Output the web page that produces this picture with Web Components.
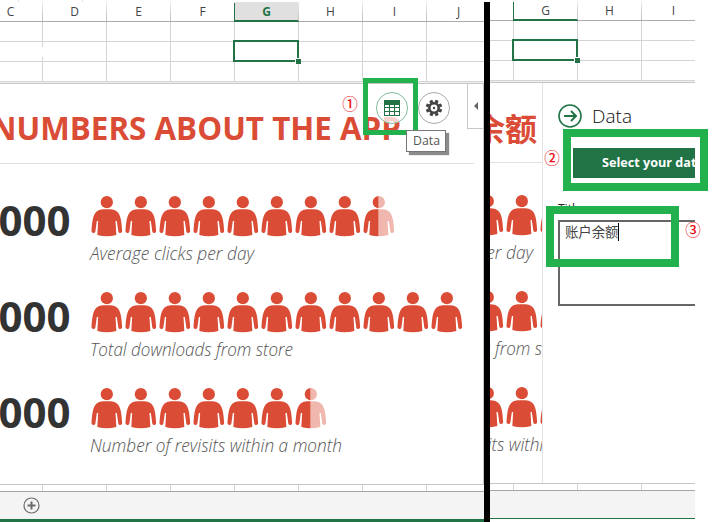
<!DOCTYPE html>
<html lang="en">
<head>
<meta charset="utf-8">
<title>Data app in a worksheet</title>
<style>
html,body{margin:0;background:#fff}
body{width:713px;height:522px;overflow:hidden;font-family:"Open Sans","Noto Sans","Noto Sans CJK SC",sans-serif}
</style>
</head>
<body>
<demo-page></demo-page>
<script>
const define=(name,html,setup)=>customElements.define(name,class extends HTMLElement{
  constructor(){super();this.attachShadow({mode:'open'})}
  connectedCallback(){
    if(this.ready)return;this.ready=true;
    const t=document.createElement('template');
    t.innerHTML=typeof html==='function'?html(this):html;
    this.shadowRoot.append(t.content.cloneNode(true));
    if(setup)setup(this,this.shadowRoot);
  }
});

/* One line of text stretched to a given width */
define('fit-text',`<style>:host{display:block;white-space:nowrap}span{display:inline-block;transform-origin:0 50%}</style><span><slot></slot></span>`,
(el,root)=>{const s=root.querySelector('span');const w=s.getBoundingClientRect().width,t=+el.getAttribute('width');if(w&&t)s.style.transform=`scaleX(${t/w})`});

define('person-icon',el=>`<style>:host{display:block;width:34px;height:41px;flex:none}svg{display:block}.faded{opacity:.4}</style>
<svg width="32" height="41" viewBox="0 0 96 123" fill="#da4c35">
<defs><g id="p"><circle cx="47.500" cy="18.500" r="18.300"/><path d="M47 40C64 40 74 41 82 51C90 62 92 83 93.500 105C93.500 112 84 113 82 107L77.500 75L73.500 75L76 117Q47 125 19 117L21.500 75L17.500 75L13 107C11 113 1.500 112 1.500 105C3 83 5 62 13 51C21 41 31 40 47 40Z"/></g>
<clipPath id="l"><rect width="46.500" height="123"/></clipPath><clipPath id="r"><rect x="46.500" width="49" height="123"/></clipPath></defs>
${el.hasAttribute('half')?'<g clip-path="url(#l)"><use href="#p"/></g><g class="faded" clip-path="url(#r)"><use href="#p"/></g>':'<use href="#p"/>'}
</svg>`);

define('metric-row',el=>`<style>:host{display:grid;grid-template-columns:70.500px 1fr;column-gap:20px;height:96px}
.num{justify-self:end;font-size:42px;font-weight:700;line-height:48px;color:#333}
.people{display:flex;margin-bottom:4px}
.cap{margin-left:-1px;font-size:18.500px;line-height:24px;font-style:italic;font-weight:300;color:#555}</style>
<div class="num">000</div><div><div class="people">${'<person-icon></person-icon>'.repeat(+el.getAttribute('full'))}${el.hasAttribute('half')?'<person-icon half></person-icon>':''}</div>
<fit-text class="cap" width="${el.getAttribute('width')}">${el.getAttribute('caption')}</fit-text></div>`);

define('people-app',`<style>:host{display:block;box-sizing:border-box;height:400px;background:#fff;border-right:1px solid #c6c6c6}
header{box-sizing:border-box;height:80px;width:474px;padding-top:23px;border-bottom:1px solid #e0e0e0;font-size:32px;font-weight:700;line-height:42px;color:#da4c35}
main{padding-top:32px}</style>
<header><slot></slot></header><main>
<metric-row full="8" half caption="Average clicks per day" width="164"></metric-row>
<metric-row full="11" caption="Total downloads from store" width="203"></metric-row>
<metric-row full="6" half caption="Number of revisits within a month" width="252"></metric-row></main>`);

define('column-header',`<style>:host{display:flex;height:19px;border-bottom:1px solid #ababab;margin-left:-21px;font-size:12px;line-height:19px;color:#444}
div{box-sizing:border-box;flex:0 0 64px;text-align:center;border-right:1px solid;border-image:linear-gradient(#f0f0f0,#bcbcbc) 1}
.on{box-shadow:0 1px #217346,inset 0 -1px #217346,-1px 1px #217346}
.shade{background:#e0e0e0;font-weight:700;color:#217346}</style>`,
(el,root)=>{for(const c of 'CDEFGHIJ'){const d=document.createElement('div');d.textContent=c;if(c==='G')d.className=el.hasAttribute('shade')?'on shade':'on';root.append(d)}});

define('cell-grid',el=>`<style>:host{display:grid;grid-template-columns:repeat(8,64px);grid-auto-rows:20px;margin-left:-21px}
:host([short]){grid-auto-rows:6px}
i{box-sizing:border-box;border-right:1px solid #d4d4d4;border-bottom:1px solid #d4d4d4;position:relative}
:host([short]) i{border-bottom:0}
.sel{z-index:1}
.sel::before{content:"";position:absolute;left:-2px;top:-2px;width:62px;height:18px;border:2px solid #217346}
.sel::after{content:"";position:absolute;right:-3px;bottom:-3px;width:5px;height:5px;background:#217346;border:solid #fff;border-width:1px 0 0 1px}
.gap::after{content:"";position:absolute;right:-1px;top:5px;width:1px;height:10px;background:#fff}</style>
${Array.from({length:el.hasAttribute('short')?8:24},(_,i)=>`<i class="${el.hasAttribute('short')?'':i===12?'sel':i===8&&el.hasAttribute('gap')?'gap':''}"></i>`).join('')}`);

define('work-sheet',el=>`<style>:host{display:block;width:484px;height:522px;background:#fff}
.top{height:2px;background:linear-gradient(#e4e4e4,#e4e4e4) 18px 0/1px 2px no-repeat,linear-gradient(#e4e4e4,#e4e4e4) 82px 0/1px 2px no-repeat}
.edge{height:1px;background:#efefef;border-bottom:1px solid #c6c6c6}
.foot{height:1px;background:#c6c6c6}
.tabs{height:27px;background:#f4f4f4;border-top:1px solid #a6a6a6;display:flex;align-items:center;padding-left:22.500px}
.tabs svg{margin-top:-1px}
.status{background:#217346;height:3px}
:host([plain]) .status{height:1px}</style>
<div class="top"></div><column-header ${el.hasAttribute('plain')?'':'shade'}></column-header><cell-grid ${el.hasAttribute('plain')?'':'gap'}></cell-grid>
<div class="edge"></div><people-app><slot></slot></people-app><div class="foot"></div><cell-grid short></cell-grid>
<div class="tabs"><svg width="17" height="17" viewBox="0 0 17 17" fill="none" stroke="#6c6c6c"><circle cx="8.500" cy="8.500" r="7.500" stroke-width="1.200"/><path d="M8.500 4.500v8M4.500 8.500h8" stroke-width="2"/></svg></div><div class="status"></div>`);

define('tool-button',el=>`<style>:host{display:flex;box-sizing:border-box;width:32px;height:32px;border-radius:50%;border:1px solid #aaa;background:rgba(255,255,255,.75);align-items:center;justify-content:center}
:host([kind=table]){border-color:#82b99b}svg{display:block}</style>
${el.getAttribute('kind')==='table'?`<svg width="16" height="16" shape-rendering="crispEdges"><path fill="#217346" fill-rule="evenodd" d="M0 0H16V16H0ZM1 5v2h4V5ZM6 5v2h4V5ZM11 5v2h4V5ZM1 8v3h4V8ZM6 8v3h4V8ZM11 8v3h4V8ZM1 12v3h4v-3ZM6 12v3h4v-3ZM11 12v3h4v-3Z"/></svg>`
:`<svg width="18" height="18" viewBox="-9 -9 18 18" fill="#444"><circle r="4.700" fill="none" stroke="#444" stroke-width="2.600"/><circle r="1.200"/>${[22,67,112,157,202,247,292,337].map(a=>`<path transform="rotate(${a})" d="M-1.800 -5.500L-1.500 -8.300H1.500L1.800 -5.500Z"/>`).join('')}</svg>`}`);

define('mark-box',`<style>:host{display:block;box-sizing:border-box;border:8px solid #22b14c}</style>`);
define('step-number',`<style>:host{display:block;width:16px;text-align:center;font:500 15.500px/16px "Noto Sans CJK SC",sans-serif;color:#ed1020}</style><slot></slot>`);
define('tool-tip',`<style>:host{display:block;box-sizing:border-box;width:40px;height:22px;border:1px solid #767676;background:#fff;box-shadow:3px 3px 1px rgba(0,0,0,.45);font-size:12px;line-height:20px;padding-left:5.500px;color:#575757}</style><fit-text width="27">Data</fit-text>`);
define('collapse-tab',`<style>:host{display:flex;box-sizing:border-box;width:16px;height:45px;border:solid #c6c6c6;border-width:0 0 1px 1px;background:#fff;align-items:center;justify-content:center}svg{display:block}</style><svg width="4" height="8"><path d="M4 0V8L0 4Z" fill="#666"/></svg>`);

define('data-pane',`<style>:host{display:block;box-sizing:border-box;width:153px;height:400px;background:#fff;border-left:1px solid #e4e4e4;padding:21px 0 0 15px;overflow:hidden}
h2{display:flex;gap:10px;align-items:center;margin:0;height:24px;font-size:19px;line-height:24px;font-weight:300;color:#111}
svg{display:block}
.button{box-sizing:border-box;margin:20px 0 0 15px;height:30px;padding-left:28.500px;background:#217346;color:#fff;font-size:13px;font-weight:700;line-height:29px}
.label{margin-top:20px;height:22px;font-size:12px;line-height:22px;color:#222}
.area{box-sizing:border-box;height:86px;border:2px solid #666;border-right:0;padding:0 0 0 4.500px;display:flex;font:13.400px/19px "Noto Sans CJK SC",sans-serif;color:#444}
.area b{width:1px;height:18px;margin-top:1px;background:#000}</style>
<h2><svg width="24" height="24" fill="none" stroke="#217346" stroke-width="2"><circle cx="12" cy="12" r="11" stroke-width="1.600"/><path d="M6 12H18M13 7L18 12L13 17"/></svg><fit-text width="40">Data</fit-text></h2>
<div class="button"><fit-text width="102">Select your data</fit-text></div>
<div class="label">Title</div><div class="area"><fit-text width="53.500">账户余额</fit-text><b></b></div>`);

define('demo-page',`<style>:host{display:grid;grid-template-columns:484px 6px 205px;width:713px;height:522px;position:relative;background:#fff}
.view{overflow:hidden;height:522px}
.bar{background:#000;margin-top:2px}
.right work-sheet{margin:-1px 0 0 -211px}
.t1{margin-left:-9.500px}.t2{margin-left:194px;line-height:42px;font-family:"Noto Sans CJK SC",sans-serif}
.over{position:absolute}</style>
<div class="view"><work-sheet><fit-text class="t1" width="410">NUMBERS ABOUT THE APP</fit-text></work-sheet></div>
<div class="bar"></div>
<div class="view right"><work-sheet plain><div class="t2">余额</div></work-sheet></div>
<data-pane class="over" style="left:542px;top:83px"></data-pane>
<tool-button class="over" kind="table" style="left:376px;top:92px"></tool-button>
<tool-button class="over" kind="gear" style="left:418px;top:92px"></tool-button>
<collapse-tab class="over" style="left:467px;top:84px"></collapse-tab>
<mark-box class="over" style="left:363px;top:78px;width:55px;height:57px;border-width:5px"></mark-box>
<tool-tip class="over" style="left:406px;top:130px"></tool-tip>
<mark-box class="over" style="left:563px;top:129px;width:145px;height:62px"></mark-box>
<mark-box class="over" style="left:546px;top:206px;width:133px;height:61px"></mark-box>
<step-number class="over" style="left:342px;top:95px">①</step-number>
<step-number class="over" style="left:544px;top:149px">②</step-number>
<step-number class="over" style="left:685px;top:221px">③</step-number>`);
</script>
</body>
</html>
